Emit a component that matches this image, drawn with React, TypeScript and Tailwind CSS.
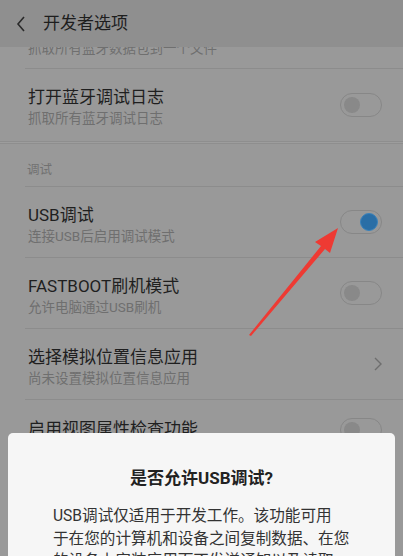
import React from "react";

function Toggle({ on }: { on?: boolean }) {
  return (
    <div className="w-[42px] h-[24px] rounded-full border border-[#878787] flex items-center px-[3px]">
      {on ? (
        <div className="ml-auto w-[18px] h-[18px] rounded-full bg-[#2a6ea6] border border-[#3a82bb]" />
      ) : (
        <div className="w-[16px] h-[16px] rounded-full bg-[#898989]" />
      )}
    </div>
  );
}

function Row({
  title,
  sub,
  right,
}: {
  title: string;
  sub: string;
  right: React.ReactNode;
}) {
  return (
    <div className="ml-[25px] border-b border-[#8c8c8c]">
      <div className="-ml-[25px] h-[70px] flex items-center pl-[28px] pr-[21px]">
        <div className="flex-1 flex flex-col pt-[5px]">
          <div className="text-[17px] leading-[22px] text-[#1f1f1f]">{title}</div>
          <div className="text-[13.5px] leading-[18px] text-[#6f6f6f] mt-[1px]">{sub}</div>
        </div>
        {right}
      </div>
    </div>
  );
}

export default function App() {
  return (
    <div
      className="relative w-[403px] h-[556px] overflow-hidden bg-[#999999]"
      style={{ fontFamily: '"Roboto", "Noto Sans CJK SC", sans-serif' }}
    >
      {/* header */}
      <div className="h-[47px] bg-[#8f8f8f] flex items-center">
        <svg width="12" height="18" viewBox="0 0 12 18" className="ml-[15px]">
          <path d="M9 2 L3 9 L9 16" stroke="#2a2a2a" strokeWidth="1.6" fill="none" />
        </svg>
        <div className="ml-[16px] text-[17px] text-[#1e1e1e]">开发者选项</div>
      </div>

      {/* partially scrolled item */}
      <div className="ml-[25px] border-b border-[#8c8c8c] h-[22px] overflow-hidden">
        <div className="pl-[3px] -mt-[8px] text-[13.5px] leading-[18px] text-[#6f6f6f]">
          抓取所有蓝牙数据包到一个文件
        </div>
      </div>

      <div className="h-[72px] flex items-center pl-[28px] pr-[21px]">
        <div className="flex-1 flex flex-col pt-[2px]">
          <div className="text-[17px] leading-[22px] text-[#1f1f1f]">打开蓝牙调试日志</div>
          <div className="text-[13.5px] leading-[18px] text-[#6f6f6f] mt-[1px]">抓取所有蓝牙调试日志</div>
        </div>
        <Toggle />
      </div>

      {/* section separator */}
      <div className="h-[3px] border-t border-b border-[#8e8e8e] bg-[#9d9d9d]" />

      <div className="ml-[25px] h-[43px] border-b border-[#8c8c8c] flex items-end pb-[7px] pl-[2px]">
        <span className="text-[12.5px] leading-[18px] text-[#717171]">调试</span>
      </div>

      <Row title="USB调试" sub="连接USB后启用调试模式" right={<Toggle on />} />
      <Row title="FASTBOOT刷机模式" sub="允许电脑通过USB刷机" right={<Toggle />} />
      <Row
        title="选择模拟位置信息应用"
        sub="尚未设置模拟位置信息应用"
        right={
          <svg width="10" height="16" viewBox="0 0 10 16" className="-mr-[1px]">
            <path d="M2 2 L8 8 L2 14" stroke="#6e6e6e" strokeWidth="1.4" fill="none" />
          </svg>
        }
      />
      <div className="h-[70px] flex items-start pt-[18px] pl-[28px] pr-[21px]">
        <div className="flex-1 text-[17px] leading-[22px] text-[#1f1f1f]">启用视图属性检查功能</div>
        <Toggle />
      </div>

      {/* dialog */}
      <div className="absolute left-[8px] right-[8px] top-[433px] bottom-0 bg-[#f6f6f6] rounded-t-[5px]">
        <div className="pt-[33px] text-center text-[17px] font-bold text-[#222222] leading-[24px]">
          是否允许USB调试?
        </div>
        <div className="mt-[15px] pl-[45px] text-[15.6px] leading-[22.5px] text-[#333333] whitespace-nowrap">
          USB调试仅适用于开发工作。该功能可用
          <br />
          于在您的计算机和设备之间复制数据、在您
          <br />
          的设备上安装应用而不发送通知以及读取
          <br />
          日志数据。
        </div>
      </div>

      {/* red arrow annotation */}
      <svg className="absolute left-0 top-0" width="403" height="556" viewBox="0 0 403 556">
        <path
          d="M249 335 L321 246 L315 242 L338 228 L330 253 L325 249 L251 336 Z"
          fill="#ee3a33"
        />
      </svg>
    </div>
  );
}
